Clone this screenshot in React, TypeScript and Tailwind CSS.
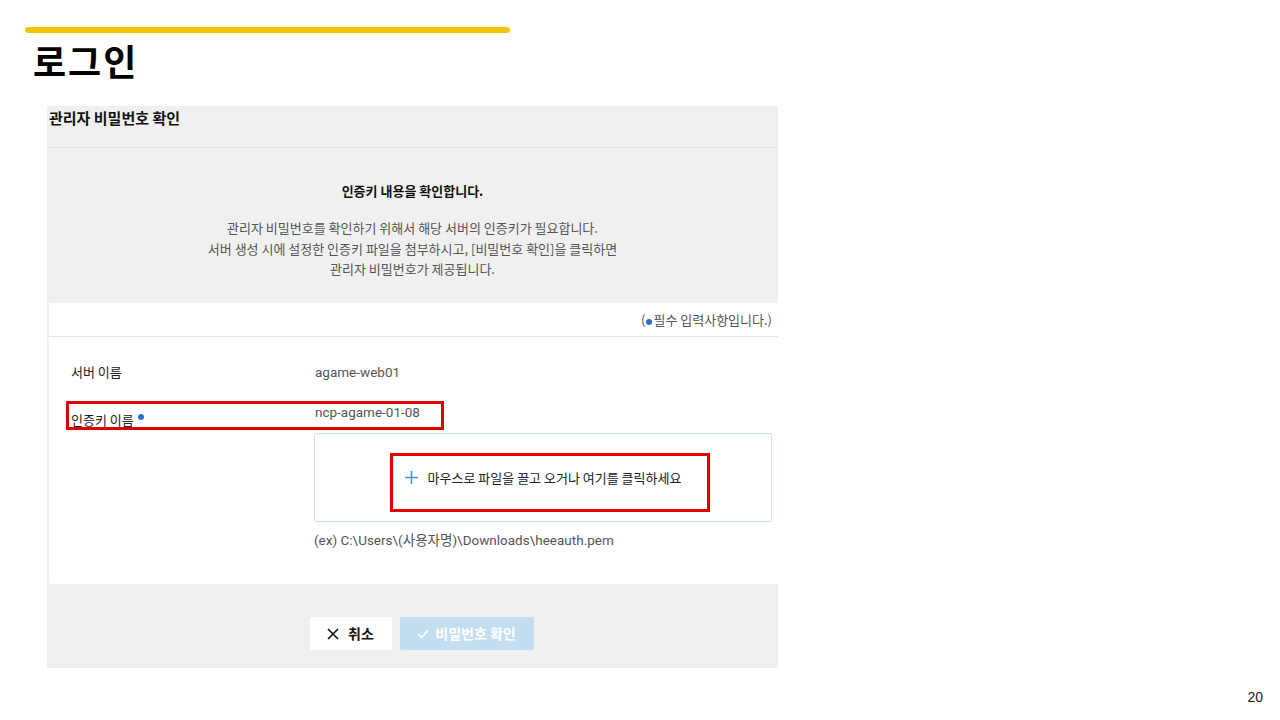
const font = "font-['Noto_Sans_CJK_KR','Noto_Sans',sans-serif]";
const latin = "font-['Roboto','Noto_Sans_CJK_KR',sans-serif] text-[13.5px]";

function RequiredDot() {
  return <span className="inline-block w-[6px] h-[6px] rounded-full bg-[#2f6fc4] align-top mt-[4px] mx-[1px]" />;
}

function App() {
  return (
    <div className={`w-[1280px] h-[720px] bg-white relative overflow-hidden ${font}`}>
      {/* slide header */}
      <div className="pt-[27px] pl-[25px]">
        <div className="w-[485px] h-[6px] rounded-full bg-[#f6c300]" />
        <h1 className="ml-[8px] mt-[3px] text-[36px] leading-[48px] font-bold text-black tracking-[2px]">로그인</h1>
      </div>

      {/* dialog */}
      <div className="ml-[47px] mt-[22px] w-[731px] h-[562px] bg-[#f0f0f0] flex flex-col">
        <div className="h-[42px] border-b border-[#e4e4e4] pl-[2px] pt-[1px] text-[15px] font-bold text-[#111] leading-[22px]">
          관리자 비밀번호 확인
        </div>
        <div className="h-[155px] flex flex-col items-center pt-[33px]">
          <p className="text-[13px] font-bold text-[#111] leading-[20px]">인증키 내용을 확인합니다.</p>
          <p className="mt-[17px] text-[13px] text-[#555] leading-[20.5px] text-center">
            관리자 비밀번호를 확인하기 위해서 해당 서버의 인증키가 필요합니다.
            <br />
            서버 생성 시에 설정한 인증키 파일을 첨부하시고, [비밀번호 확인]을 클릭하면
            <br />
            관리자 비밀번호가 제공됩니다.
          </p>
        </div>

        <div className="ml-[2px] h-[281px] bg-white rounded-bl-[3px] flex flex-col">
          <div className="h-[34px] border-b border-[#e6e6e6] flex items-center justify-end pr-[6px] text-[13px] text-[#555]">
            (<RequiredDot />필수 입력사항입니다.)
          </div>
          <div className="relative flex-1">
            <div className="flex pt-[25px] text-[13px] leading-[20px]">
              <span className="w-[266px] pl-[22px] text-[#222]">서버 이름</span>
              <span className={`text-[#555] ${latin}`}>agame-web01</span>
            </div>
            <div className="flex pt-[20px] text-[13px] leading-[20px]">
              <span className="w-[266px] pl-[22px] pt-[8px] text-[#222]">
                인증키 이름 <RequiredDot />
              </span>
              <span className={`text-[#555] ${latin}`}>ncp-agame-01-08</span>
            </div>
            <div className="ml-[265px] mt-[3px] w-[458px] h-[89px] border border-[#cfe2ef] rounded-[2px] flex items-center justify-center">
              <div className="flex items-center text-[13px] text-[#222]">
                <svg width="13" height="13" viewBox="0 0 13 13" stroke="#3d9ad6" strokeWidth="1.6" className="mr-[10px]">
                  <path d="M6.5 0 V13 M0 6.5 H13" />
                </svg>
                마우스로 파일을 끌고 오거나 여기를 클릭하세요
              </div>
            </div>
            <p className={`ml-[265px] mt-[8px] text-[#555] leading-[20px] ${latin}`}>
              (ex) C:\Users\(사용자명)\Downloads\heeauth.pem
            </p>

            {/* highlight boxes */}
            <div className="absolute left-[17px] top-[64px] w-[378px] h-[29px] border-[3px] border-[#e00000]" />
            <div className="absolute left-[341px] top-[116px] w-[320px] h-[59px] border-[3px] border-[#e00000]" />
          </div>
        </div>

        <div className="flex-1 flex justify-center items-start pt-[33px] gap-[8px] pl-[18px]">
          <button className="w-[82px] h-[33px] bg-white rounded-[2px] flex items-center justify-center gap-[9px] text-[14px] font-bold text-[#111]">
            <svg width="12" height="12" viewBox="0 0 12 12" stroke="#111" strokeWidth="1.6">
              <path d="M1 1 L11 11 M11 1 L1 11" />
            </svg>
            취소
          </button>
          <button className="w-[134px] h-[33px] bg-[#c3def0] rounded-[2px] flex items-center justify-center gap-[6px] text-[14px] font-bold text-white">
            <svg width="12" height="10" viewBox="0 0 12 10" stroke="#fff" strokeWidth="1.6" fill="none">
              <path d="M1 5 L4.5 8.5 L11 1.5" />
            </svg>
            비밀번호 확인
          </button>
        </div>
      </div>

      <span className="absolute right-[17px] bottom-[12px] text-[14px] text-[#222] font-['Liberation_Sans',sans-serif]">20</span>
    </div>
  );
}

export default App;
